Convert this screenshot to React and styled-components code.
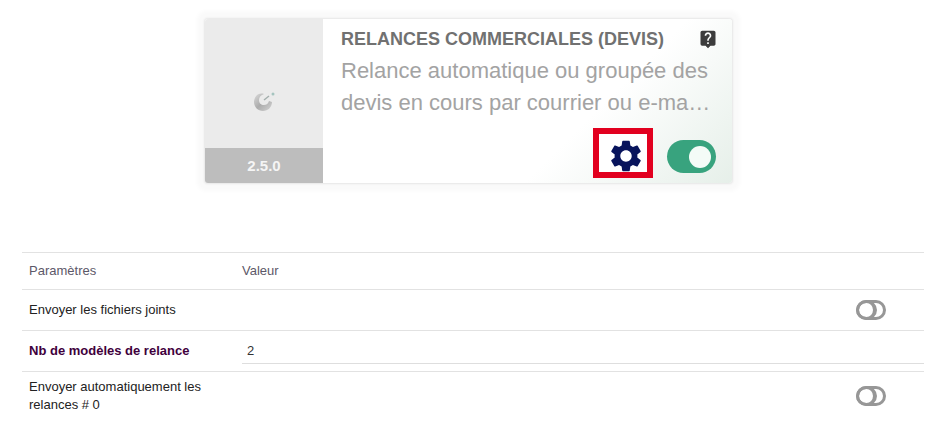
import { useState } from "react";
import { MdLiveHelp, MdSettings } from "react-icons/md";
import styled, { createGlobalStyle } from "styled-components";

const App = () => {
    const [active, setActive] = useState(true);
    const [attach, setAttach] = useState(false);
    const [auto, setAuto] = useState(false);
    const [count, setCount] = useState("2");

    return (
        <Page>
            <GlobalStyle />
            <CardArea>
                <ModuleCard>
                    <Aside>
                        <LogoArea>
                            <ModuleLogo />
                        </LogoArea>
                        <Version>2.5.0</Version>
                    </Aside>
                    <CardBody>
                        <TitleRow>
                            <Title>Relances commerciales (devis)</Title>
                            <HelpButton type="button" aria-label="Aide">
                                <MdLiveHelp />
                            </HelpButton>
                        </TitleRow>
                        <Description>
                            Relance automatique ou groupée des devis en cours par courrier ou e-ma…
                        </Description>
                        <Actions>
                            <SettingsButton type="button" aria-label="Configuration">
                                <MdSettings />
                            </SettingsButton>
                            <ActiveSwitch
                                type="checkbox"
                                aria-label="Activer le module"
                                checked={active}
                                onChange={(e) => setActive(e.target.checked)}
                            />
                        </Actions>
                    </CardBody>
                </ModuleCard>
            </CardArea>

            <Settings>
                <colgroup>
                    <LabelCol />
                    <col />
                </colgroup>
                <thead>
                    <tr>
                        <th>Paramètres</th>
                        <th>Valeur</th>
                    </tr>
                </thead>
                <tbody>
                    <tr>
                        <td>
                            <label htmlFor="attach">Envoyer les fichiers joints</label>
                        </td>
                        <SwitchCell>
                            <SmallSwitch
                                id="attach"
                                type="checkbox"
                                checked={attach}
                                onChange={(e) => setAttach(e.target.checked)}
                            />
                        </SwitchCell>
                    </tr>
                    <tr>
                        <td>
                            <StrongLabel htmlFor="count">Nb de modèles de relance</StrongLabel>
                        </td>
                        <InputCell>
                            <ValueInput
                                id="count"
                                type="text"
                                value={count}
                                onChange={(e) => setCount(e.target.value)}
                            />
                        </InputCell>
                    </tr>
                    <tr>
                        <td>
                            <label htmlFor="auto">Envoyer automatiquement les relances # 0</label>
                        </td>
                        <SwitchCell>
                            <SmallSwitch
                                id="auto"
                                type="checkbox"
                                checked={auto}
                                onChange={(e) => setAuto(e.target.checked)}
                            />
                        </SwitchCell>
                    </tr>
                </tbody>
            </Settings>
        </Page>
    );
};

const ModuleLogo = () => (
    <svg width="22" height="20" viewBox="0 0 22 20" aria-hidden="true">
        <defs>
            <linearGradient id="logo" x1="0" y1="0" x2="1" y2="1">
                <stop offset="0" stopColor="#dadada" />
                <stop offset="0.5" stopColor="#acacac" />
                <stop offset="1" stopColor="#d4d4d4" />
            </linearGradient>
        </defs>
        <path
            d="M11 2C5 0 1 5 1 10c0 5 4 9 9 9 5 0 9-4 9-9l-3-1c-1 3-3 4-5 4-3 0-5-2-5-5 0-3 2-5 5-6z"
            fill="url(#logo)"
        />
        <path d="M11 8l5-4" stroke="#a3aeac" strokeWidth="1.5" />
        <circle cx="20" cy="2" r="1.5" fill="#a5c4bf" />
    </svg>
);

const GlobalStyle = createGlobalStyle`
    *,
    *::before {
        box-sizing: border-box;
    }

    body {
        margin: 0;
        background: #fff;
        font-family: "Liberation Sans", Arial, sans-serif;
    }
`;

const Page = styled.main`
    padding: 19px 18px 0 22px;
`;

const CardArea = styled.div`
    display: flex;
    justify-content: center;
    margin-bottom: 69px;
    padding-right: 9px;
`;

const ModuleCard = styled.section`
    display: flex;
    width: 100%;
    max-width: 527px;
    min-height: 164px;
    border-radius: 3px;
    overflow: hidden;
    background: linear-gradient(135deg, #fff 70%, #e6efe9 100%);
    box-shadow: 0 0 2px 1px #e6e6e6, 0 0 4px 8px #fafafa;
`;

const Aside = styled.div`
    display: flex;
    flex-direction: column;
    flex: 0 0 118px;
    background: #ebebeb;
`;

const LogoArea = styled.div`
    flex: 1;
    display: flex;
    align-items: center;
    justify-content: center;
    padding-top: 36px;
`;

const Version = styled.div`
    height: 35px;
    background: #bdbdbd;
    color: #f5f5f5;
    font-size: 15px;
    font-weight: 700;
    line-height: 35px;
    text-align: center;
`;

const CardBody = styled.div`
    flex: 1;
    min-width: 0;
    display: flex;
    flex-direction: column;
    padding: 8px 16px 5px 18px;
`;

const TitleRow = styled.div`
    display: flex;
    align-items: center;
    justify-content: space-between;
    height: 24px;
`;

const Title = styled.h2`
    margin: 0;
    color: #717171;
    font-size: 18px;
    font-weight: 700;
    text-transform: uppercase;
    white-space: nowrap;
`;

const HelpButton = styled.button`
    display: flex;
    margin-right: -2px;
    padding: 0;
    border: 0;
    background: none;
    color: #3c3c3c;
    font-size: 20px;
    cursor: pointer;
`;

const Description = styled.p`
    margin: 4px 0 0;
    color: #a3a3a3;
    font-size: 22px;
    line-height: 32px;
`;

const Actions = styled.div`
    display: flex;
    align-items: center;
    justify-content: flex-end;
    gap: 14px;
    margin-top: auto;
`;

const SettingsButton = styled.button`
    display: flex;
    align-items: flex-start;
    justify-content: flex-end;
    width: 60px;
    height: 50px;
    padding: 3px 2px 0 0;
    border: 6px solid #e2001f;
    background: #fff;
    color: #08145c;
    font-size: 38px;
    overflow: hidden;
    cursor: pointer;

    svg {
        flex: none;
    }
`;

const ActiveSwitch = styled.input`
    appearance: none;
    display: flex;
    align-items: center;
    justify-content: ${({ checked }) => (checked ? "flex-end" : "flex-start")};
    width: 49px;
    height: 33px;
    margin: 7px 0 0;
    padding: 0 5px;
    border-radius: 17px;
    background: ${({ checked }) => (checked ? "#38a37e" : "#bdbdbd")};
    cursor: pointer;

    &::before {
        content: "";
        width: 22px;
        height: 22px;
        border-radius: 50%;
        background: #f4fbf7;
    }
`;

const Settings = styled.table`
    width: 100%;
    table-layout: fixed;
    border-collapse: collapse;
    color: #222;
    font-size: 13px;
    line-height: 18px;

    tr {
        border-top: 1px solid #e2e2e2;
    }

    th {
        height: 37px;
        padding: 0 7px;
        color: #5c5868;
        font-weight: 400;
        text-align: left;
    }

    th + th {
        padding-left: 0;
    }

    td {
        height: 41px;
        padding: 6px 7px;
    }
`;

const LabelCol = styled.col`
    width: 220px;
`;

const StrongLabel = styled.label`
    color: #40003c;
    font-weight: 700;
`;

const SwitchCell = styled.td`
    && {
        padding-right: 38px;
    }
`;

const SmallSwitch = styled.input`
    appearance: none;
    display: flex;
    align-items: center;
    justify-content: ${({ checked }) => (checked ? "flex-end" : "flex-start")};
    width: 30px;
    height: 20px;
    margin: 0 0 0 auto;
    border: 3px solid #979797;
    border-radius: 10px;
    cursor: pointer;

    &::before {
        content: "";
        flex: none;
        width: 21px;
        height: 20px;
        margin: 0 -3px;
        border: 3px solid #979797;
        border-right-width: 4px;
        border-radius: 50%;
    }
`;

const InputCell = styled.td`
    && {
        padding: 0;
    }
`;

const ValueInput = styled.input`
    display: block;
    width: 100%;
    height: 25px;
    padding: 0 5px;
    border: 0;
    border-bottom: 1px solid #dedede;
    background: none;
    color: #333;
    font: inherit;
    outline: none;
`;

export default App;
